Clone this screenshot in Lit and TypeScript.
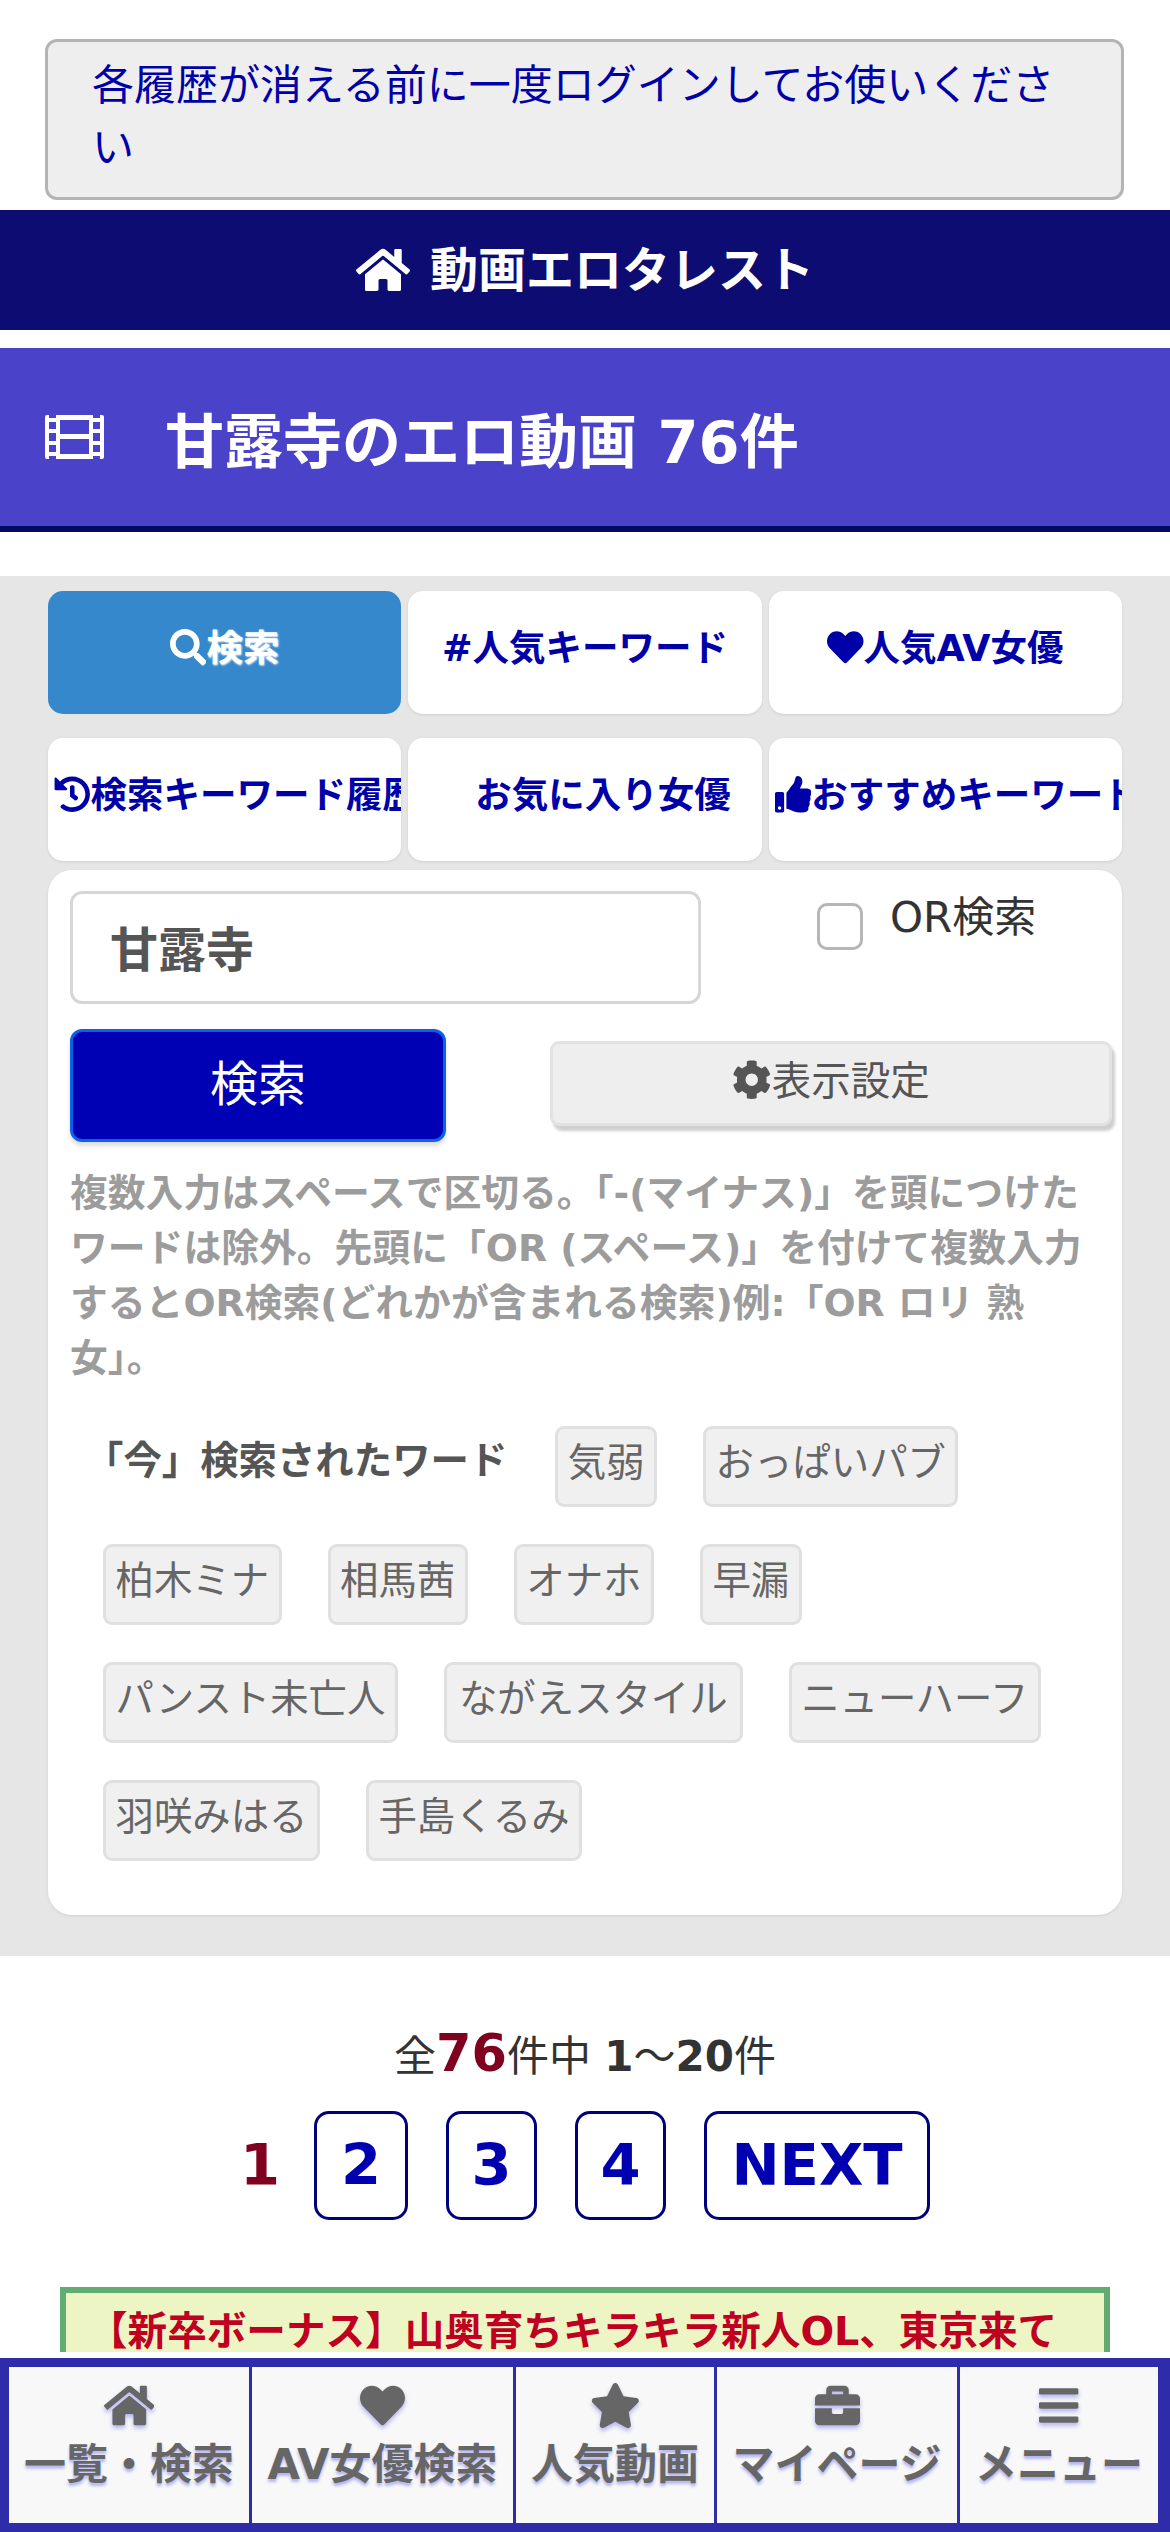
import { LitElement, html, css, svg } from "lit";
import { customElement } from "lit/decorators.js";

const P = {
  home: "M280.37 148.26L96 300.11V464a16 16 0 0 0 16 16l112.06-.29a16 16 0 0 0 15.92-16V368a16 16 0 0 1 16-16h64a16 16 0 0 1 16 16v95.64a16 16 0 0 0 16 16.05L464 480a16 16 0 0 0 16-16V300L295.67 148.26a12.19 12.19 0 0 0-15.3 0zM571.6 251.47L488 182.56V44.05a12 12 0 0 0-12-12h-56a12 12 0 0 0-12 12v72.61L318.47 43a48 48 0 0 0-61 0L4.34 251.47a12 12 0 0 0-1.6 16.9l25.5 31A12 12 0 0 0 45.15 301l235.22-193.74a12.19 12.19 0 0 1 15.3 0L530.9 301a12 12 0 0 0 16.9-1.6l25.5-31a12 12 0 0 0-1.7-16.93z",
  heart: "M462.3 62.6C407.5 15.9 326 24.3 275.7 76.2L256 96.5l-19.7-20.3C186.1 24.3 104.5 15.9 49.7 62.6c-62.8 53.6-66.1 149.8-9.9 207.9l193.5 199.8c12.5 12.9 32.8 12.9 45.3 0l193.5-199.8c56.3-58.1 53-154.3-9.8-207.9z",
  star: "M259.3 17.8L194 150.2 47.9 171.5c-26.2 3.8-36.7 36.1-17.7 54.6l105.7 103-25 145.5c-4.5 26.3 23.2 46 46.4 33.7L288 439.6l130.7 68.7c23.2 12.2 50.9-7.4 46.4-33.7l-25-145.5 105.7-103c19-18.5 8.5-50.8-17.7-54.6L382 150.2 316.7 17.8c-11.7-23.6-45.6-23.9-57.4 0z",
  briefcase: "M320 336c0 8.84-7.16 16-16 16h-96c-8.84 0-16-7.16-16-16v-48H0v144c0 25.6 22.4 48 48 48h416c25.6 0 48-22.4 48-48V288H320v48zm144-208h-80V80c0-25.6-22.4-48-48-48H176c-25.6 0-48 22.4-48 48v48H48c-25.6 0-48 22.4-48 48v80h512v-80c0-25.6-22.4-48-48-48zm-144 0H192V96h128v32z",
  bars: "M16 132h416c8.837 0 16-7.163 16-16V76c0-8.837-7.163-16-16-16H16C7.163 60 0 67.163 0 76v40c0 8.837 7.163 16 16 16zm0 160h416c8.837 0 16-7.163 16-16v-40c0-8.837-7.163-16-16-16H16c-8.837 0-16 7.163-16 16v40c0 8.837 7.163 16 16 16zm0 160h416c8.837 0 16-7.163 16-16v-40c0-8.837-7.163-16-16-16H16c-8.837 0-16 7.163-16 16v40c0 8.837 7.163 16 16 16z",
  search: "M505 442.7L405.3 343c-4.5-4.5-10.6-7-17-7H372c27.6-35.3 44-79.7 44-128C416 93.1 322.9 0 208 0S0 93.1 0 208s93.1 208 208 208c48.3 0 92.7-16.4 128-44v16.3c0 6.4 2.5 12.5 7 17l99.7 99.7c9.4 9.4 24.6 9.4 33.9 0l28.3-28.3c9.4-9.4 9.4-24.6.1-34zM208 336c-70.7 0-128-57.2-128-128 0-70.7 57.2-128 128-128 70.7 0 128 57.2 128 128 0 70.7-57.2 128-128 128z",
  history: "M504 255.531c.253 136.64-111.18 248.372-247.82 248.468-59.015.042-113.223-20.53-155.822-54.911-11.077-8.94-11.905-25.541-1.839-35.607l11.267-11.267c8.609-8.609 22.353-9.551 31.891-1.984C173.062 425.135 212.781 440 256 440c101.705 0 184-82.311 184-184 0-101.705-82.311-184-184-184-48.814 0-93.149 18.969-126.068 49.932l50.754 50.754c10.08 10.08 2.941 27.314-11.313 27.314H24c-8.837 0-16-7.163-16-16V38.627c0-14.254 17.234-21.393 27.314-11.314l49.372 49.372C129.209 34.136 189.552 8 256 8c136.81 0 247.747 110.78 248 247.531zm-180.912 78.784l9.823-12.63c8.138-10.463 6.253-25.542-4.21-33.679L288 256.349V152c0-13.255-10.745-24-24-24h-16c-13.255 0-24 10.745-24 24v135.651l65.409 50.874c10.463 8.137 25.541 6.253 33.679-4.21z",
  thumbs: "M104 224H24c-13.255 0-24 10.745-24 24v240c0 13.255 10.745 24 24 24h80c13.255 0 24-10.745 24-24V248c0-13.255-10.745-24-24-24zM64 472c-13.255 0-24-10.745-24-24s10.745-24 24-24 24 10.745 24 24-10.745 24-24 24zM384 81.452c0 42.416-25.97 66.208-33.277 94.548h101.723c33.397 0 59.397 27.746 59.553 58.098.084 17.938-7.546 37.249-19.439 49.197l-.11.11c9.836 23.337 8.237 56.037-9.308 79.469 8.681 25.895-.069 57.704-16.382 74.757 4.298 17.598 2.244 32.575-6.148 44.632C440.202 511.587 389.616 512 346.839 512l-2.845-.001c-48.287-.017-87.806-17.598-119.56-31.725-15.957-7.099-36.821-15.887-52.651-16.178-6.54-.12-11.783-5.457-11.783-11.998v-213.77c0-3.2 1.282-6.271 3.558-8.521 39.614-39.144 56.648-80.587 89.117-113.111 14.804-14.832 20.188-37.236 25.393-58.902C282.515 39.293 291.817 0 312 0c24 0 72 8 72 81.452z",
  cog: "M487.4 315.7l-42.6-24.6c4.3-23.2 4.3-47 0-70.2l42.6-24.6c4.9-2.8 7.1-8.6 5.5-14-11.1-35.6-30-67.8-54.7-94.6-3.8-4.1-10-5.1-14.8-2.3L380.8 110c-17.9-15.4-38.5-27.3-60.8-35.1V25.8c0-5.6-3.9-10.5-9.4-11.7-36.7-8.2-74.3-7.8-109.2 0-5.5 1.2-9.4 6.1-9.4 11.7V75c-22.2 7.9-42.8 19.8-60.8 35.1L88.7 85.5c-4.9-2.8-11-1.9-14.8 2.3-24.7 26.7-43.6 58.9-54.7 94.6-1.7 5.4.6 11.2 5.5 14L67.3 221c-4.3 23.2-4.3 47 0 70.2l-42.6 24.6c-4.9 2.8-7.1 8.6-5.5 14 11.1 35.6 30 67.8 54.7 94.6 3.8 4.1 10 5.1 14.8 2.3l42.6-24.6c17.9 15.4 38.5 27.3 60.8 35.1v49.2c0 5.6 3.9 10.5 9.4 11.7 36.7 8.2 74.3 7.8 109.2 0 5.5-1.2 9.4-6.1 9.4-11.7v-49.2c22.2-7.9 42.8-19.8 60.8-35.1l42.6 24.6c4.9 2.8 11 1.9 14.8-2.3 24.7-26.7 43.6-58.9 54.7-94.6 1.5-5.5-.7-11.3-5.6-14.1zM256 336c-44.1 0-80-35.9-80-80s35.9-80 80-80 80 35.9 80 80-35.9 80-80 80z",
};

function icon(name: keyof typeof P, vw = 512) {
  const cls = vw === 576 ? "i wide" : vw === 448 ? "i narrow" : "i";
  return html`<svg class=${cls} viewBox="0 0 ${vw} 512">${svg`<path d=${P[name]}></path>`}</svg>`;
}

const filmIcon = html`<svg class="film" viewBox="0 0 59 44">
  <path fill-rule="evenodd" d="M2 0h2v3h7V0h37v3h7V0h2a2 2 0 0 1 2 2v40a2 2 0 0 1-2 2h-2v-3h-7v3H11v-3H4v3H2a2 2 0 0 1-2-2V2a2 2 0 0 1 2-2zM4 7v7h7V7zm0 11v8h7v-8zm0 12v7h7v-7zM48 7v7h7V7zm0 11v8h7v-8zm0 12v7h7v-7zM15 5v14h29V5zm0 19v15h29V24z"></path>
</svg>`;

const chips = [
  ["気弱", "おっぱいパブ"],
  ["柏木ミナ", "相馬茜", "オナホ", "早漏"],
  ["パンスト未亡人", "ながえスタイル", "ニューハーフ"],
  ["羽咲みはる", "手島くるみ"],
];

const navItems: [keyof typeof P, number, string][] = [
  ["home", 576, "一覧・検索"],
  ["heart", 512, "AV女優検索"],
  ["star", 576, "人気動画"],
  ["briefcase", 512, "マイページ"],
  ["bars", 448, "メニュー"],
];

@customElement("app-root")
export class AppRoot extends LitElement {
  static styles = css`
    :host {
      display: block;
      position: relative;
      height: 2532px;
      overflow: hidden;
      background: #fff;
      color: #333;
      font-family: "DejaVu Sans", "Noto Sans CJK JP", sans-serif;
    }
    * { box-sizing: border-box; }
    .i { width: 1em; height: 1em; fill: currentColor; vertical-align: -0.125em; display: inline-block; }
    .i.wide { width: 1.125em; }
    .i.narrow { width: 0.875em; }
    .notice {
      margin: 39px 46px 0 45px;
      border: 3px solid #b4b4b4;
      border-radius: 12px;
      background: #eeeeef;
      padding: 13px 44px 18px 44px;
      color: #0000a8;
      font-size: 42px;
      line-height: 62px;
    }
    .site {
      margin-top: 10px;
      height: 120px;
      background: #0c0c73;
      color: #fff;
      display: flex;
      align-items: center;
      justify-content: center;
      gap: 20px;
      font-size: 48px;
      font-weight: bold;
      line-height: 72px;
    }
    .title {
      margin-top: 18px;
      height: 184px;
      background: #4a42c8;
      border-bottom: 6px solid #000a60;
      color: #fff;
      display: flex;
      align-items: center;
      padding-left: 45px;
      font-size: 59px;
      font-weight: bold;
    }
    .film { width: 59px; height: 44px; fill: #fff; margin-right: 61px; }
    .panel {
      margin-top: 44px;
      background: #e6e6e7;
      padding: 15px 48px 41px;
    }
    .tabs {
      display: grid;
      grid-template-columns: repeat(3, 1fr);
      column-gap: 7px;
      row-gap: 24px;
    }
    .tab {
      height: 123px;
      background: #fff;
      border-radius: 15px;
      box-shadow: 0 1px 3px #d0d0d0;
      color: #0000a8;
      font-size: 36.5px;
      font-weight: bold;
      line-height: 54px;
      padding: 31px 6px 0;
      text-align: center;
      white-space: nowrap;
      overflow: hidden;
    }
    .tab.on { background: #3688cc; color: #fff; box-shadow: none; text-shadow: 1px 1px 2px #fff; }
    .spacer { display: inline-block; width: 36px; }
    .card {
      margin-top: 9px;
      background: #fff;
      border-radius: 24px;
      box-shadow: 0 1px 3px #d0d0d0;
      padding: 21px 22px 54px;
    }
    .row { display: flex; align-items: flex-start; }
    .input {
      flex: none;
      width: 631px;
      height: 113px;
      border: 3px solid #d6d6d6;
      border-radius: 12px;
      padding-left: 37px;
      font-size: 48px;
      font-weight: bold;
      color: #555;
      line-height: 112px;
    }
    .check {
      flex: none;
      width: 46px;
      height: 47px;
      margin: 12px 0 0 116px;
      border: 3px solid #b6b6b6;
      border-radius: 10px;
      background: #fff;
    }
    .orl { flex: none; margin-left: 27px; font-size: 42px; line-height: 54px; color: #333; }
    .row2 { margin-top: 25px; }
    .go {
      flex: none;
      width: 376px;
      height: 113px;
      background: #0000b4;
      border: 3px solid #0a62e6;
      border-radius: 12px;
      color: #fff;
      font-size: 48px;
      text-align: center;
      line-height: 104px;
      box-shadow: 0 4px 4px #ddd;
    }
    .set {
      flex: none;
      width: 562px;
      height: 85px;
      margin: 12px 0 0 104px;
      background: #eeeeee;
      border: 3px solid #e2e2e2;
      border-radius: 9px;
      box-shadow: 3px 5px 3px #cfcfcf;
      color: #555;
      font-size: 39.5px;
      line-height: 74px;
      text-align: center;
    }
    .help {
      margin: 24px 0 0;
      color: #9c9c9c;
      font-size: 37.8px;
      font-weight: bold;
      line-height: 55px;
    }
    .chips {
      margin-top: 40px;
      padding-left: 33px;
      display: flex;
      flex-direction: column;
      gap: 37px;
    }
    .chiprow { display: flex; gap: 46px; align-items: flex-start; }
    .lead {
      margin: 0 2px 0 -18px;
      font-size: 38.4px;
      font-weight: bold;
      color: #555;
      line-height: 70px;
      white-space: nowrap;
    }
    .chip {
      height: 81px;
      padding: 0 9.5px;
      background: #f0f0f0;
      border: 3px solid #e0e0e0;
      border-radius: 9px;
      color: #666;
      font-size: 38.4px;
      line-height: 68px;
      white-space: nowrap;
    }
    .chip.roomy { padding: 0 12px; }
    .count {
      margin-top: 68px;
      text-align: center;
      font-size: 42px;
      line-height: 60px;
      color: #333;
    }
    .count b { font-weight: bold; }
    .count .big { color: #800020; font-size: 51px; }
    .pager {
      margin-top: 24px;
      display: flex;
      justify-content: center;
      align-items: center;
      gap: 38px;
      font-size: 57.6px;
      font-weight: bold;
    }
    .cur { color: #800020; margin-right: -4px; }
    .pg {
      height: 109px;
      width: 91px;
      border: 3px solid #00007c;
      border-radius: 15px;
      color: #0000b0;
      line-height: 103px;
      text-align: center;
    }
    .pg.first { width: 94px; }
    .pg.next { width: 226px; }
    .ad {
      margin: 67px 60px 0;
      height: 160px;
      border: 6px solid #62ac72;
      background: #edf5c5;
      color: #c00020;
      font-size: 39.6px;
      font-weight: bold;
      line-height: 63px;
      white-space: nowrap;
      padding: 7px 0 0 22px;
    }
    .nav {
      position: absolute;
      left: 0;
      right: 0;
      bottom: 0;
      height: 174px;
      background: #2e2ca8;
      box-shadow: 0 -6px 0 #fff;
      padding: 9px 12px 9px 9px;
      display: grid;
      grid-template-columns: 240px 261px 198px 240px 1fr;
      column-gap: 3px;
    }
    .cell {
      background: #f7f8f7;
      color: #666;
      text-align: center;
      font-size: 42px;
      font-weight: bold;
      white-space: nowrap;
      text-shadow: 0 3px 3px #b4b4f0;
      overflow: hidden;
    }
    .cell .ic {
      height: 52px;
      margin-top: 14px;
      font-size: 45px;
      line-height: 52px;
    }
    .cell .i { filter: drop-shadow(0 3px 2px #b4b4f0); }
    .cell .tx { line-height: 56px; margin-top: 4px; }
  `;

  render() {
    return html`
      <div class="notice">各履歴が消える前に一度ログインしてお使いください</div>
      <div class="site">${icon("home", 576)}<span>動画エロタレスト</span></div>
      <div class="title">${filmIcon}<span>甘露寺のエロ動画 76件</span></div>
      <div class="panel">
        <div class="tabs">
          <div class="tab on">${icon("search")}検索</div>
          <div class="tab">#人気キーワード</div>
          <div class="tab">${icon("heart")}人気AV女優</div>
          <div class="tab">${icon("history")}検索キーワード履歴</div>
          <div class="tab"><span class="spacer"></span>お気に入り女優</div>
          <div class="tab">${icon("thumbs")}おすすめキーワード</div>
        </div>
        <div class="card">
          <div class="row">
            <div class="input">甘露寺</div>
            <div class="check"></div>
            <div class="orl">OR検索</div>
          </div>
          <div class="row row2">
            <div class="go">検索</div>
            <div class="set">${icon("cog")}表示設定</div>
          </div>
          <p class="help">複数入力はスペースで区切る。「-(マイナス)」を頭につけたワードは除外。先頭に「OR (スペース)」を付けて複数入力するとOR検索(どれかが含まれる検索)例:「OR ロリ 熟女」。</p>
          <div class="chips">
            ${chips.map(
              (r, idx) => html`<div class="chiprow">
                ${idx === 0 ? html`<div class="lead">「今」検索されたワード</div>` : ""}
                ${r.map((c) => html`<div class=${c === "ながえスタイル" ? "chip roomy" : "chip"}>${c}</div>`)}
              </div>`
            )}
          </div>
        </div>
      </div>
      <div class="count">全<b class="big">76</b>件中 <b>1</b>〜<b>20</b>件</div>
      <div class="pager">
        <span class="cur">1</span>
        <span class="pg first">2</span>
        <span class="pg">3</span>
        <span class="pg">4</span>
        <span class="pg next">NEXT</span>
      </div>
      <div class="ad">【新卒ボーナス】山奥育ちキラキラ新人OL、東京来て</div>
      <div class="nav">
        ${navItems.map(
          ([n, w, t]) => html`<div class="cell">
            <div class="ic">${icon(n, w)}</div>
            <div class="tx">${t}</div>
          </div>`
        )}
      </div>
    `;
  }
}
